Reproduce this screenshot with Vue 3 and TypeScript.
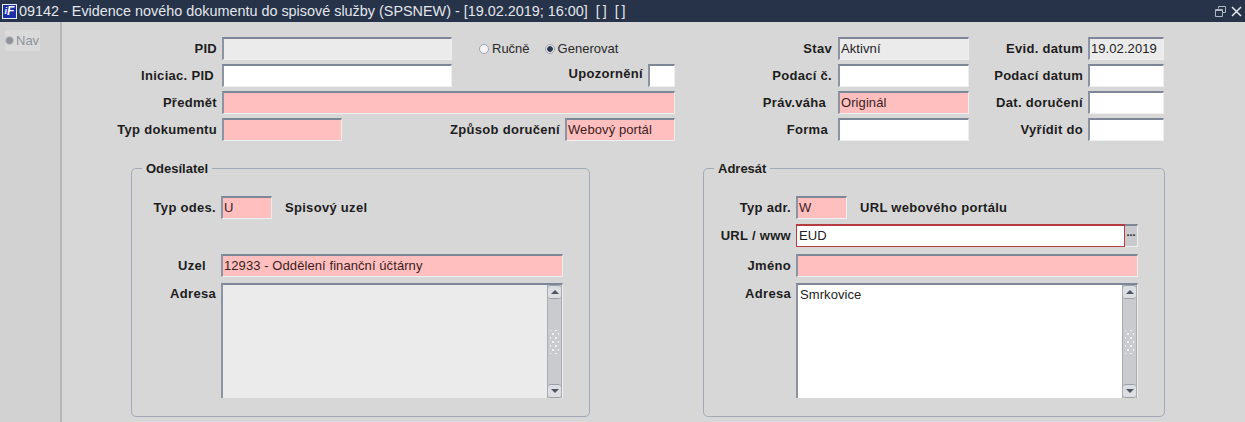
<script setup lang="ts">
type Tone = "white" | "pink" | "grey";

interface SideRow {
  label: string;
  nudge: string;
  tone: Tone;
  value: string;
  dateLabel: string;
  dateValue: string;
  dateTone: Tone;
}

const sideRows: SideRow[] = [
  { label: "Stav", nudge: "", tone: "grey", value: "Aktivní", dateLabel: "Evid. datum", dateValue: "19.02.2019", dateTone: "grey" },
  { label: "Podací č.", nudge: "", tone: "white", value: "", dateLabel: "Podací datum", dateValue: "", dateTone: "white" },
  { label: "Práv.váha", nudge: "nudge-6", tone: "pink", value: "Originál", dateLabel: "Dat. doručení", dateValue: "", dateTone: "white" },
  { label: "Forma", nudge: "nudge-4", tone: "white", value: "", dateLabel: "Vyřídit do", dateValue: "", dateTone: "white" }
];
</script>

<template>
  <div class="window">
    <header class="titlebar">
      <span class="logo"><i>i</i><b>F</b></span>
      <span class="title">09142 - Evidence nového dokumentu do spisové služby (SPSNEW) - [19.02.2019; 16:00]&nbsp; [&thinsp;]&nbsp; [&thinsp;]</span>
      <span class="controls">
        <svg width="11" height="11" viewBox="0 0 11 11" fill="none" stroke="#aeb5c0">
          <path d="M3.5 2.5V.5h7v6H8" />
          <path d="M.5 3.5h7v7h-7z" />
          <path d="M.5 4.5h7" />
        </svg>
        <svg width="11" height="11" viewBox="0 0 11 11" fill="none" stroke="#e6e9ee" stroke-width="1.5">
          <path d="M1 1l9 9M10 1l-9 9" />
        </svg>
      </span>
    </header>

    <div class="body">
      <aside class="sidebar">
        <div class="nav"><span class="nav-dot"></span>Nav</div>
      </aside>

      <main class="content">
        <section class="top">
          <div class="top-left">
            <div class="row">
              <label class="lbl main-lbl">PID</label>
              <div class="field grey w-wide"></div>
              <div class="radios">
                <span class="radio"></span><span class="radio-text">Ručně</span>
                <span class="radio on"></span><span class="radio-text">Generovat</span>
              </div>
            </div>
            <div class="row">
              <label class="lbl main-lbl nudge-3">Iniciac. PID</label>
              <div class="field white w-wide"></div>
              <label class="lbl push up-2">Upozornění</label>
              <div class="field white w-flag"></div>
            </div>
            <div class="row">
              <label class="lbl main-lbl">Předmět</label>
              <div class="field pink grow"></div>
            </div>
            <div class="row">
              <label class="lbl main-lbl">Typ dokumentu</label>
              <div class="field pink w-type"></div>
              <label class="lbl push">Způsob doručení</label>
              <div class="field pink w-way">Webový portál</div>
            </div>
          </div>

          <div class="top-right">
            <div v-for="r in sideRows" :key="r.label" class="row">
              <label class="lbl side-lbl" :class="r.nudge">{{ r.label }}</label>
              <div class="field w-side" :class="r.tone">{{ r.value }}</div>
              <label class="lbl date-lbl">{{ r.dateLabel }}</label>
              <div class="field w-date" :class="r.dateTone">{{ r.dateValue }}</div>
            </div>
          </div>
        </section>

        <section class="groups">
          <div class="group sender">
            <span class="legend">Odesílatel</span>
            <div class="row first">
              <label class="lbl group-lbl">Typ odes.</label>
              <div class="field pink w-code">U</div>
              <span class="lbl hint">Spisový uzel</span>
            </div>
            <div class="row blank"></div>
            <div class="row name">
              <label class="lbl group-lbl nudge-10">Uzel</label>
              <div class="field pink grow">12933 - Oddělení finanční účtárny</div>
            </div>
            <div class="row area-row">
              <label class="lbl group-lbl area-lbl">Adresa</label>
              <div class="field area grey">
                <div class="area-text"></div>
                <div class="scroll">
                  <span class="sb-btn"><i class="arrow-up"></i></span>
                  <span class="sb-track"><i class="grip"></i></span>
                  <span class="sb-btn"><i class="arrow-down"></i></span>
                </div>
              </div>
            </div>
          </div>

          <div class="group recipient">
            <span class="legend">Adresát</span>
            <div class="row first">
              <label class="lbl group-lbl">Typ adr.</label>
              <div class="field pink w-code">W</div>
              <span class="lbl hint">URL webového portálu</span>
            </div>
            <div class="row blank">
              <label class="lbl group-lbl">URL / www</label>
              <div class="field white focused">EUD</div>
              <span class="more">...</span>
            </div>
            <div class="row name">
              <label class="lbl group-lbl">Jméno</label>
              <div class="field pink grow"></div>
            </div>
            <div class="row area-row">
              <label class="lbl group-lbl area-lbl">Adresa</label>
              <div class="field area white">
                <div class="area-text">Smrkovice</div>
                <div class="scroll">
                  <span class="sb-btn"><i class="arrow-up"></i></span>
                  <span class="sb-track"><i class="grip"></i></span>
                  <span class="sb-btn"><i class="arrow-down"></i></span>
                </div>
              </div>
            </div>
          </div>
        </section>
      </main>
    </div>
  </div>
</template>

<style scoped>
.window {
  width: 1245px;
  height: 422px;
  display: flex;
  flex-direction: column;
  overflow: hidden;
  background: #d7d7d7;
  font-family: "Liberation Sans", Arial, sans-serif;
  font-size: 13px;
  color: #222;
}

.titlebar {
  height: 22px;
  flex: none;
  display: flex;
  align-items: center;
  background: #263349;
  color: #e3e6eb;
  font-size: 14.4px;
}

.logo {
  width: 15px;
  height: 15px;
  margin: 0 2px 0 2px;
  flex: none;
  display: flex;
  align-items: center;
  justify-content: center;
  background: #1c2fa8;
  border: 1px solid #e8ecf5;
  box-sizing: border-box;
  color: #fff;
  font-size: 12px;
  line-height: 1;
  font-style: italic;
}

.logo i {
  font-size: 9px;
  font-weight: bold;
}

.title {
  white-space: nowrap;
}

.controls {
  margin-left: auto;
  margin-right: 3px;
  display: flex;
  gap: 5px;
  align-items: center;
}

.body {
  flex: 1;
  display: flex;
  min-height: 0;
}

.sidebar {
  width: 60px;
  flex: none;
  background: #d2d2d2;
  border-right: 2px solid #b4b6ba;
  padding-top: 8px;
  padding-left: 5px;
  box-sizing: content-box;
  margin-left: -5px;
}

.nav {
  width: 35px;
  margin-left: 5px;
  height: 21px;
  display: flex;
  align-items: center;
  background: #dadada;
  color: #8f949c;
  font-size: 13px;
}

.nav-dot {
  width: 9px;
  height: 9px;
  margin: 0 2px 0 0;
  box-sizing: border-box;
  border-radius: 50%;
  background: #8d9198;
  border: 1px solid #c4c4c4;
}

.content {
  flex: 1;
  min-width: 0;
  padding-top: 15px;
}

.top {
  display: flex;
  height: 103px;
}

.top-left,
.top-right {
  display: flex;
  flex-direction: column;
  gap: 4px;
}

.top-left {
  width: 613px;
}

.top-right {
  margin-left: 5px;
}

.row {
  display: flex;
  align-items: center;
  height: 23px;
  flex: none;
}

.lbl {
  font-weight: bold;
  font-size: 13px;
  letter-spacing: 0.3px;
  white-space: nowrap;
  text-align: right;
  color: #1d1d1d;
  box-sizing: border-box;
}

.main-lbl {
  width: 155px;
  margin-right: 5px;
}

.side-lbl {
  width: 152px;
  margin-right: 6px;
}

.date-lbl {
  width: 114px;
  margin-right: 5px;
}

.group-lbl {
  width: 84px;
  margin-right: 5px;
}

.nudge-3 {
  padding-right: 3px;
}

.nudge-4 {
  padding-right: 4px;
}

.nudge-6 {
  padding-right: 6px;
}

.nudge-10 {
  padding-right: 10px;
}

.up-2 {
  margin-bottom: 4px;
}

.push {
  margin-left: auto;
  margin-right: 5px;
}

.field {
  height: 23px;
  box-sizing: border-box;
  border-top: 2px solid #7d8798;
  border-left: 2px solid #8b94a3;
  border-right: 1px solid #eeeeee;
  border-bottom: 1px solid #f0f0f0;
  padding-left: 1px;
  line-height: 19px;
  font-size: 13px;
  letter-spacing: 0.08px;
  white-space: nowrap;
  overflow: hidden;
  flex: none;
}

.white {
  background: #fff;
}

.pink {
  background: #ffbfbf;
  color: #3b1d1d;
}

.grey {
  background: #ebebeb;
}

.grow {
  flex: 1;
}

.w-wide {
  width: 230px;
}

.w-flag {
  width: 27px;
}

.w-type {
  width: 120px;
}

.w-way {
  width: 110px;
}

.w-side {
  width: 131px;
}

.w-date {
  width: 76px;
}

.w-code {
  width: 51px;
}

.radios {
  display: flex;
  align-items: center;
  margin-left: 27px;
}

.radio {
  width: 10px;
  height: 10px;
  box-sizing: border-box;
  border-radius: 50%;
  background: #f4f4f4;
  border: 1px solid #9ea4ae;
  margin-right: 3px;
}

.radio.on {
  margin-left: 15px;
  background: radial-gradient(circle, #2b3952 0 2.5px, #e8e8e8 3.2px);
}

.radio-text {
  font-size: 13px;
  color: #2a2a2a;
}

.groups {
  display: flex;
  margin-left: 69px;
  margin-top: 28px;
}

.group {
  position: relative;
  height: 249px;
  box-sizing: border-box;
  border: 1px solid #a3abb6;
  border-radius: 5px;
  padding-top: 27px;
  padding-right: 26px;
}

.sender {
  width: 459px;
}

.recipient {
  width: 462px;
  margin-left: 113px;
}

.recipient .group-lbl {
  width: 87px;
}

.legend {
  position: absolute;
  top: -7px;
  left: 10px;
  padding: 0 4px;
  background: #d7d7d7;
  font-weight: bold;
  font-size: 13px;
  line-height: 14px;
  color: #1d1d1d;
}

.hint {
  margin-left: 13px;
}

.first {
  margin-bottom: 5px;
}

.blank {
  margin-bottom: 7px;
}

.name {
  margin-bottom: 6px;
}

.area-row {
  height: 115px;
  align-items: flex-start;
}

.area-lbl {
  margin-top: 3px;
}

.area {
  flex: 1;
  height: 115px;
  display: flex;
  padding-left: 0;
  border-bottom: none;
}

.area-text {
  flex: 1;
  padding: 0 0 0 2px;
}

.focused {
  flex: 1;
  border: 1px solid #b53c40;
  border-top-width: 2px;
  padding-left: 2px;
}

.more {
  width: 13px;
  height: 23px;
  flex: none;
  box-sizing: border-box;
  background: #c8cacd;
  border-top: 2px solid #7d8798;
  border-right: 1px solid #eee;
  border-bottom: 1px solid #eee;
  font-weight: bold;
  font-size: 11px;
  line-height: 12px;
  text-align: center;
  color: #222;
}

.scroll {
  width: 15px;
  flex: none;
  display: flex;
  flex-direction: column;
  background: #c9cbce;
  border-left: 1px solid #a9adb3;
  border-right: 1px solid #a9adb3;
  box-sizing: border-box;
}

.sb-btn {
  height: 14px;
  flex: none;
  display: flex;
  align-items: center;
  justify-content: center;
  background: #dcdee1;
  border-bottom: 1px solid #9aa0a8;
  border-top: 1px solid #9aa0a8;
  border-radius: 3px;
  box-sizing: border-box;
}

.sb-track {
  flex: 1;
  display: flex;
  align-items: center;
  justify-content: center;
}

.grip {
  width: 9px;
  height: 24px;
  background-image:
    radial-gradient(circle, #f1f1f1 0 0.9px, transparent 1.3px),
    radial-gradient(circle, #f1f1f1 0 0.9px, transparent 1.3px);
  background-size: 6px 8px;
  background-position: 0 0, 3px 4px;
}

.arrow-up,
.arrow-down {
  width: 0;
  height: 0;
  border-left: 4px solid transparent;
  border-right: 4px solid transparent;
}

.arrow-up {
  border-bottom: 4px solid #4d5563;
}

.arrow-down {
  border-top: 4px solid #4d5563;
}
</style>
